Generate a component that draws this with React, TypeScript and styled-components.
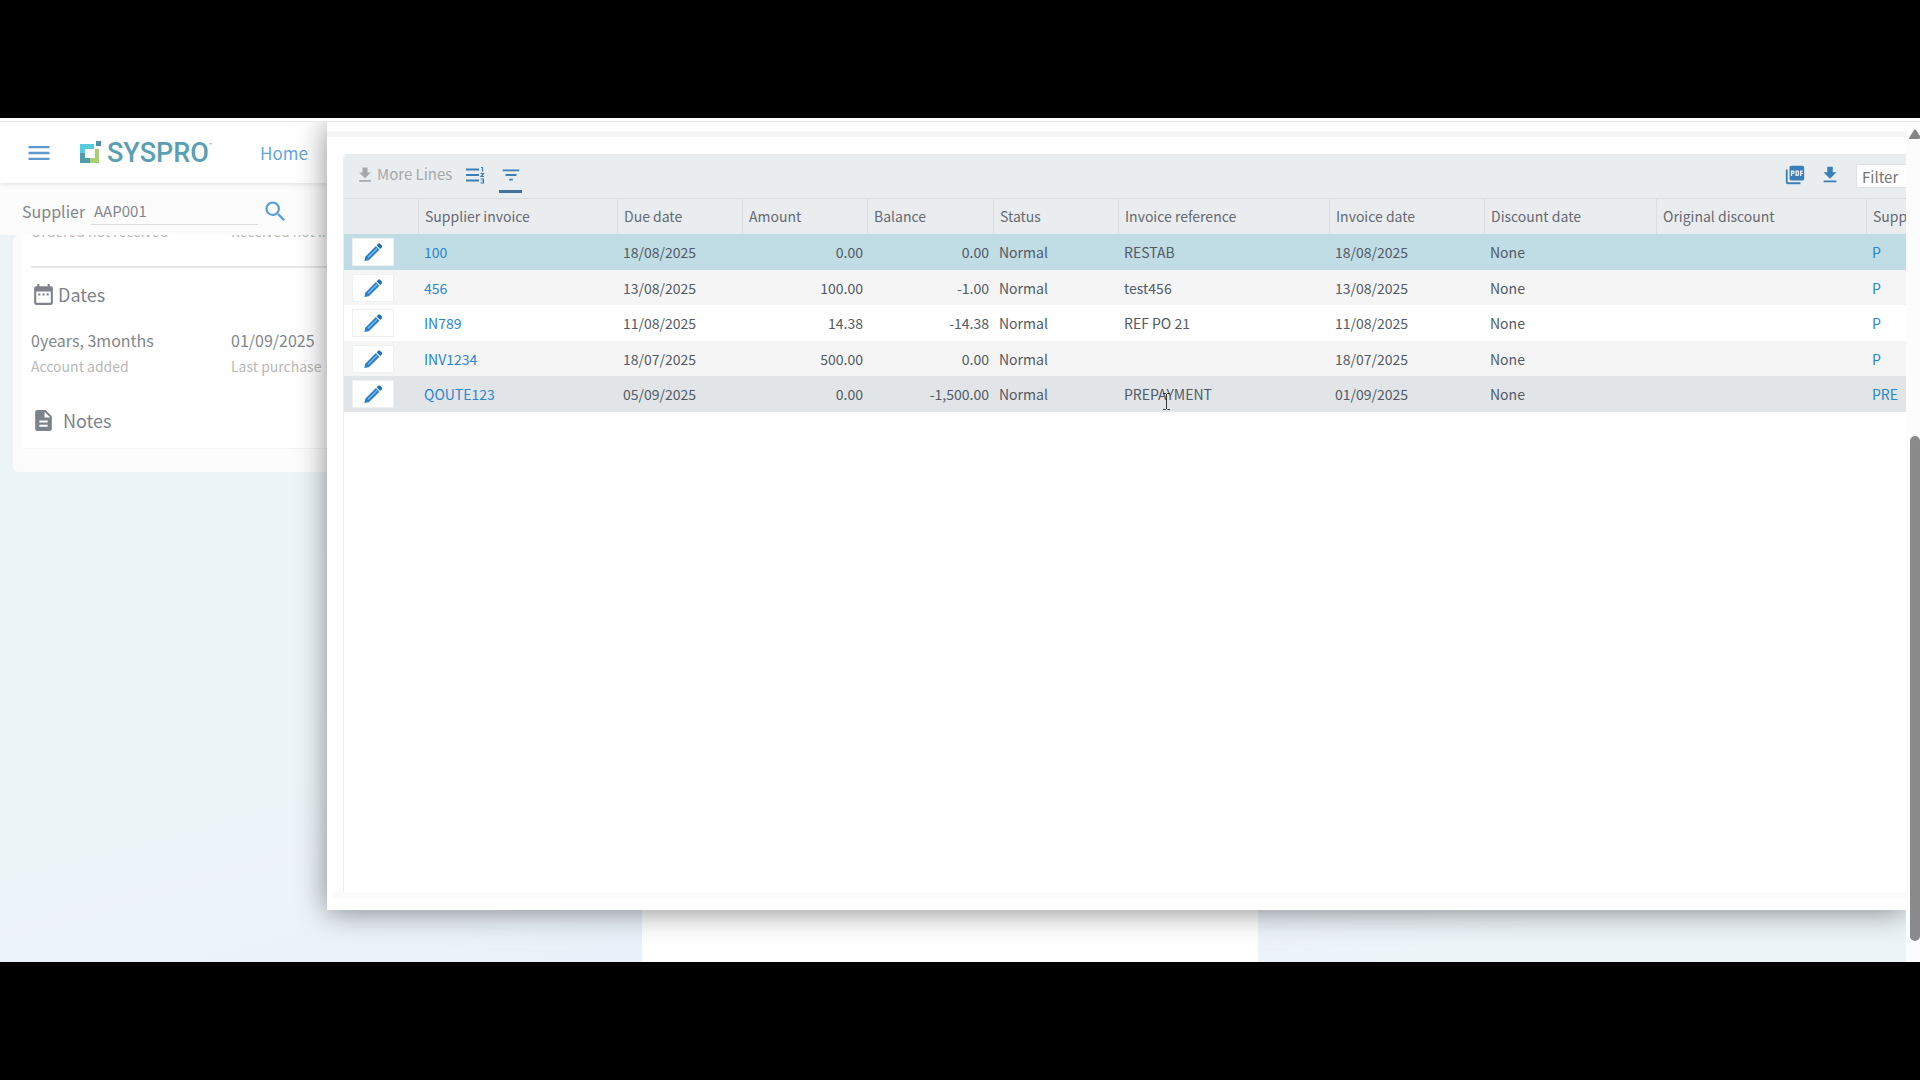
import React from 'react';
import styled, { createGlobalStyle } from 'styled-components';
import {
  MdMenu, MdSearch, MdDateRange, MdDescription, MdFileDownload, MdFilterList,
  MdPictureAsPdf,
} from 'react-icons/md';

const GlobalStyle = createGlobalStyle`
  * { box-sizing: border-box; }
  body {
    margin: 0;
    background: #000;
    color: #5b626b;
    font-family: "Noto Sans CJK SC", "Open Sans", sans-serif;
    font-size: 14px;
  }
  button, input { font: inherit; color: inherit; }
  button { border: 0; padding: 0; background: none; cursor: pointer; }
  a { text-decoration: none; }
`;

const Screen = styled.div`
  display: flex;
  flex-direction: column;
  min-height: 100vh;
  padding: 118px 0;
`;

const Viewport = styled.div`
  flex: 1;
  display: flex;
  border-top: 3px solid #fff;
  background: #fcfcfc;
`;

const Stage = styled.div`
  position: relative;
  flex: 1;
  min-width: 0;
  display: flex;
  flex-direction: column;
  overflow: hidden;
  border-top: 1px solid #e6e6e6;
  background: linear-gradient(165deg, #edf4f7 0%, #edf4f8 55%, #ebf1fa 75%, #edf4f8 90%);
`;

const ScrollTrack = styled.div`
  width: 14px;
  display: flex;
  flex-direction: column;
  align-items: flex-end;
  justify-content: space-between;
  overflow: hidden;
  border-top: 1px solid #e6e6e6;
  padding: 7px 0 21px;
`;

const ScrollUp = styled.svg`
  width: 11px;
  height: 10px;
`;

const Thumb = styled.div`
  height: 505px;
  width: 10px;
  border-radius: 5px;
  background: #8a8a8a;
`;

const NavBar = styled.header`
  position: relative;
  z-index: 1;
  flex: none;
  height: 61px;
  display: flex;
  align-items: center;
  padding-left: 25px;
  background: #fff;
  box-shadow: 0 1px 5px rgba(0, 0, 0, 0.12);
`;

const MenuButton = styled.button`
  color: #6099cb;
  svg { display: block; width: 28px; height: 28px; }
`;

const Logo = styled.div`
  display: flex;
  align-items: center;
  gap: 6px;
  margin-left: 27px;
  color: #5b9fb4;
  svg { width: 21px; height: 23px; }
`;

const LogoText = styled.span`
  display: flex;
  width: 108px;
  font-family: Roboto, sans-serif;
  font-weight: 500;
  font-size: 27px;
  line-height: 28px;
  sup { font-size: 6px; line-height: 12px; font-weight: 400; }
`;

const NavLink = styled.a`
  margin-left: 45px;
  font-size: 17px;
  color: #64a5e0;
`;

const SearchBar = styled.form`
  flex: none;
  height: 52px;
  display: flex;
  align-items: center;
  padding: 4px 0 0 22px;
  background: #fcfcfd;
  color: #82868c;
  font-size: 16px;
`;

const SupplierInput = styled.input`
  width: 167px;
  height: 28px;
  margin: 0 4px 0 6px;
  padding: 0 3px;
  border: 0;
  border-bottom: 1px solid #dcdcdc;
  background: none;
  font-size: 15px;
`;

const SearchButton = styled.button`
  color: #5b9fdc;
  svg { display: block; width: 27px; height: 27px; }
`;

const ScrollArea = styled.main`
  flex: 1;
  min-height: 0;
  display: flex;
  flex-direction: column;
  justify-content: space-between;
  overflow: hidden;
  padding-right: 6px;
`;

const Card = styled.section`
  flex: none;
  margin-left: 13px;
  padding: 0 0 23px 10px;
  border-radius: 6px;
  background: #fdfcfd;
`;

const CardInner = styled.div`
  margin-top: -17px;
  padding: 0 8px 2px;
  border-bottom: 1px solid #f4f4f4;
  background: #fff;
`;

const Pair = styled.div<{ $muted?: boolean }>`
  display: grid;
  grid-template-columns: 200px 1fr;
  line-height: 26px;
  font-size: ${(p) => (p.$muted ? 14 : 16)}px;
  color: ${(p) => (p.$muted ? '#b9b9b9' : '#82878e')};
`;

const Rule = styled.hr`
  margin: 22px 0 0;
  border: 0;
  border-top: 2px solid #e6e7e8;
`;

const SectionTitle = styled.h2<{ $gap: number }>`
  display: flex;
  align-items: center;
  gap: ${(p) => p.$gap}px;
  height: 52px;
  margin: 0;
  font-size: 18px;
  font-weight: 400;
  color: #7d838b;
  svg { width: 25px; height: 25px; }
`;

const DatesBlock = styled.div`
  padding: 7px 0 15px;
`;

const LowerCard = styled.section`
  align-self: center;
  width: 616px;
  height: 60px;
  background: #fff;
`;

const Modal = styled.section`
  position: absolute;
  z-index: 2;
  top: 0;
  right: 0;
  bottom: 52px;
  left: 327px;
  display: flex;
  flex-direction: column;
  background: #fff;
  box-shadow: 0 2px 28px rgba(0, 0, 0, 0.45);
`;

const ModalEdge = styled.div`
  flex: none;
  height: 15px;
  margin-bottom: 17px;
  border-bottom: 6px solid #f5f5f5;
`;

const Grid = styled.div`
  flex: 1;
  display: flex;
  flex-direction: column;
  min-width: 0;
  margin-left: 16px;
  border-left: 1px solid #eeeff0;
  border-top-left-radius: 4px;
  overflow: hidden;
`;

const ModalFoot = styled.div`
  flex: none;
  height: 18px;
  margin-left: 6px;
  border-top: 6px solid #fbfbfb;
`;

const Toolbar = styled.div`
  flex: none;
  height: 45px;
  display: flex;
  align-items: center;
  padding-left: 11px;
  border-bottom: 1px solid #d9dcde;
  background: #e9edf0;
  color: #3a7fb8;
`;

const MoreLines = styled.button`
  display: flex;
  align-items: center;
  gap: 2px;
  height: 44px;
  padding-bottom: 6px;
  font-size: 15px;
  color: #a3a9a9;
  svg { width: 20px; height: 22px; margin-top: 4px; }
`;

const ToolButton = styled.button<{ $active?: boolean; $space?: number }>`
  display: grid;
  place-items: center;
  width: 23px;
  height: 34px;
  margin-left: ${(p) => p.$space || 0}px;
  border-bottom: 3px solid ${(p) => (p.$active ? '#44709c' : 'transparent')};
  svg { width: 22px; height: 22px; }
`;

const Spacer = styled.div`
  flex: 1;
`;

const FilterInput = styled.input`
  width: 50px;
  height: 24px;
  margin-left: 15px;
  padding: 0 5px;
  border: 1px solid #dfe2e4;
  border-right: 0;
  background: #fff;
  font-size: 15px;
  &::placeholder { color: #757575; opacity: 1; }
`;

const Table = styled.table`
  width: 100%;
  table-layout: fixed;
  border-collapse: separate;
  border-spacing: 0;
  white-space: nowrap;
`;

const Head = styled.th`
  height: 35px;
  padding: 0 0 2px 6px;
  overflow: hidden;
  text-align: left;
  font-weight: 400;
  color: #666a70;
  background: #e9edf0;
  & + & { border-left: 1px solid #dcdfe2; }
`;

const rowColor = { selected: '#c0dce4', odd: '#fff', even: '#f5f5f5', hover: '#e1e5e8' };

const Row = styled.tr<{ $tone: keyof typeof rowColor }>`
  height: 36px;
  background: ${(p) => rowColor[p.$tone]};
  &:nth-child(even) { height: 35px; }
`;

const Cell = styled.td<{ $right?: boolean }>`
  padding: 0 4px 0 6px;
  line-height: 20px;
  text-align: ${(p) => (p.$right ? 'right' : 'left')};
  color: #525a66;
  a { color: #2b86cf; }
`;

const EditCell = styled.td`
  padding: 0 0 0 8px;
`;

const EditButton = styled.button`
  display: grid;
  place-items: center;
  width: 42px;
  height: 28px;
  border: 1px solid #eef1f3;
  background: #fff;
  svg { width: 20px; height: 20px; }
`;

const TextCursor = styled.svg`
  position: absolute;
  top: 271px;
  left: 1162px;
  z-index: 3;
  width: 9px;
  height: 17px;
`;

const columns: { title: string; width?: number }[] = [
  { title: '', width: 74 },
  { title: 'Supplier invoice', width: 199 },
  { title: 'Due date', width: 125 },
  { title: 'Amount', width: 125 },
  { title: 'Balance', width: 126 },
  { title: 'Status', width: 125 },
  { title: 'Invoice reference', width: 211 },
  { title: 'Invoice date', width: 155 },
  { title: 'Discount date', width: 172 },
  { title: 'Original discount' },
  { title: 'Supp', width: 40 },
];

type Invoice = {
  id: string; due: string; amount: string; balance: string;
  ref: string; date: string; type: string; tone: keyof typeof rowColor;
};

const invoices: Invoice[] = [
  { id: '100', due: '18/08/2025', amount: '0.00', balance: '0.00', ref: 'RESTAB', date: '18/08/2025', type: 'P', tone: 'selected' },
  { id: '456', due: '13/08/2025', amount: '100.00', balance: '-1.00', ref: 'test456', date: '13/08/2025', type: 'P', tone: 'even' },
  { id: 'IN789', due: '11/08/2025', amount: '14.38', balance: '-14.38', ref: 'REF PO 21', date: '11/08/2025', type: 'P', tone: 'odd' },
  { id: 'INV1234', due: '18/07/2025', amount: '500.00', balance: '0.00', ref: '', date: '18/07/2025', type: 'P', tone: 'even' },
  { id: 'QOUTE123', due: '05/09/2025', amount: '0.00', balance: '-1,500.00', ref: 'PREPAYMENT', date: '01/09/2025', type: 'PRE', tone: 'hover' },
];

const LogoMark = () => (
  <svg viewBox="0 0 21 23" aria-hidden="true">
    <path d="M0 3h14v5H5v5H0z" fill="#58cbdc" />
    <path d="M0 12h5v5h5v5H0z" fill="#4f9cab" />
    <path d="M10 22v-5h5V8h4v14z" fill="#a9cf73" />
    <path d="M16 0h5v5h-5z" fill="#4d92ac" />
  </svg>
);

const Pencil = () => (
  <svg viewBox="0 0 22 22" aria-hidden="true">
    <path d="M1.500 21l1-4.800L14.200 4.500l3.900 3.900L6.400 20.100z" fill="#2a82cd" />
    <path d="M15 3.700l1.800-1.800q1-.8 1.900 0l2 2q.8.900 0 1.900l-1.800 1.800z" fill="#1a6fbd" />
    <path d="M5.500 17L15.500 7" stroke="#8cc4ee" strokeWidth="1.200" />
  </svg>
);

const NumberedLines = () => (
  <svg viewBox="0 0 22 22" fill="none" stroke="currentColor" aria-hidden="true">
    <path d="M2 5.500h13M2 11h13M2 16.500h13" strokeWidth="2" />
    <path d="M17 3.500h1.500v4M16.500 9.500h3l-2.500 3h3M16.500 15h3v4h-3M17.500 17h2" strokeWidth="1.200" />
  </svg>
);

export default function App() {
  return (
    <Screen>
      <GlobalStyle />
      <Viewport>
        <Stage>
          <NavBar>
            <MenuButton aria-label="Menu"><MdMenu /></MenuButton>
            <Logo>
              <LogoMark />
              <LogoText>SYSPRO<sup>™</sup></LogoText>
            </Logo>
            <NavLink href="#home">Home</NavLink>
          </NavBar>
          <SearchBar onSubmit={(e) => e.preventDefault()}>
            <label htmlFor="supplier">Supplier</label>
            <SupplierInput id="supplier" defaultValue="AAP001" />
            <SearchButton aria-label="Search"><MdSearch /></SearchButton>
          </SearchBar>
          <ScrollArea>
            <Card>
              <CardInner>
                <Pair $muted><span>Ordered not received</span><span>Received not invoiced</span></Pair>
                <Rule />
                <SectionTitle $gap={2}><MdDateRange />Dates</SectionTitle>
                <DatesBlock>
                  <Pair><span>0years, 3months</span><span>01/09/2025</span></Pair>
                  <Pair $muted><span>Account added</span><span>Last purchase</span></Pair>
                </DatesBlock>
                <SectionTitle $gap={7}><MdDescription />Notes</SectionTitle>
              </CardInner>
            </Card>
            <LowerCard />
          </ScrollArea>
          <Modal>
            <ModalEdge />
            <Grid>
              <Toolbar>
                <MoreLines><MdFileDownload />More Lines</MoreLines>
                <ToolButton aria-label="Line numbers" $space={11}><NumberedLines /></ToolButton>
                <ToolButton aria-label="Filter rows" $active $space={13}><MdFilterList /></ToolButton>
                <Spacer />
                <ToolButton aria-label="Export to PDF"><MdPictureAsPdf /></ToolButton>
                <ToolButton aria-label="Download" $space={12}><MdFileDownload /></ToolButton>
                <FilterInput aria-label="Filter" placeholder="Filter" />
              </Toolbar>
              <Table>
                <colgroup>
                  {columns.map((c, i) => <col key={i} width={c.width} />)}
                </colgroup>
                <thead>
                  <tr>{columns.map((c, i) => <Head key={i} scope="col">{c.title}</Head>)}</tr>
                </thead>
                <tbody>
                  {invoices.map((v) => (
                    <Row key={v.id} $tone={v.tone}>
                      <EditCell><EditButton aria-label={`Edit ${v.id}`}><Pencil /></EditButton></EditCell>
                      <Cell><a href="#invoice">{v.id}</a></Cell>
                      <Cell>{v.due}</Cell>
                      <Cell $right>{v.amount}</Cell>
                      <Cell $right>{v.balance}</Cell>
                      <Cell>Normal</Cell>
                      <Cell>{v.ref}</Cell>
                      <Cell>{v.date}</Cell>
                      <Cell>None</Cell>
                      <Cell />
                      <Cell><a href="#reference">{v.type}</a></Cell>
                    </Row>
                  ))}
                </tbody>
              </Table>
            </Grid>
            <ModalFoot />
          </Modal>
          <TextCursor viewBox="0 0 9 17" fill="none" stroke="#333" aria-hidden="true">
            <path d="M1 .500h2.500l1 1 1-1H8M4.500 1.500v14M1 16.500h2.500l1-1 1 1H8" />
          </TextCursor>
        </Stage>
        <ScrollTrack>
          <ScrollUp viewBox="0 0 11 10" aria-hidden="true">
            <path d="M0 9L5 1q1-1 2 0l4 6v2q0 1-1 1H1q-1 0-1-1z" fill="#858585" />
          </ScrollUp>
          <Thumb />
        </ScrollTrack>
      </Viewport>
    </Screen>
  );
}
